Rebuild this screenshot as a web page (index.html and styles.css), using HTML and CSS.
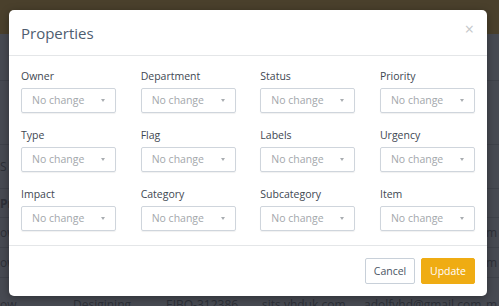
FILE: index.html
```html
<!DOCTYPE html>
<html>
<head>
<meta charset="utf-8">
<link rel="stylesheet" href="styles.css">
</head>
<body>
<div class="page">
  <div class="topbar"></div>
  <div class="row r1"></div>
  <div class="row r2"></div>
  <div class="row r3"><span class="c0">S</span></div>
  <div class="row r4"><span class="c0 bold">Pri</span></div>
  <div class="row r5"><span class="c0">ow</span><span class="cend">m</span></div>
  <div class="row r6"><span class="c0">ow</span><span class="cend">m</span></div>
  <div class="row r7"><span class="c0">ow</span><span class="c1">Desigining</span><span class="c2">EIBQ-312386</span><span class="c3">sits.vhduk.com</span><span class="c4">adolfvhd@gmail.com</span><span class="cend">m</span></div>
</div>

<div class="modal">
  <div class="modal-header">
    <h4 class="title">Properties</h4>
    <span class="close">×</span>
  </div>
  <div class="modal-body">
    <div class="field"><label>Owner</label><div class="select">No change<i class="caret"></i></div></div>
    <div class="field"><label>Department</label><div class="select">No change<i class="caret"></i></div></div>
    <div class="field"><label>Status</label><div class="select">No change<i class="caret"></i></div></div>
    <div class="field"><label>Priority</label><div class="select">No change<i class="caret"></i></div></div>
    <div class="field"><label>Type</label><div class="select">No change<i class="caret"></i></div></div>
    <div class="field"><label>Flag</label><div class="select">No change<i class="caret"></i></div></div>
    <div class="field"><label>Labels</label><div class="select">No change<i class="caret"></i></div></div>
    <div class="field"><label>Urgency</label><div class="select">No change<i class="caret"></i></div></div>
    <div class="field"><label>Impact</label><div class="select">No change<i class="caret"></i></div></div>
    <div class="field"><label>Category</label><div class="select">No change<i class="caret"></i></div></div>
    <div class="field"><label>Subcategory</label><div class="select">No change<i class="caret"></i></div></div>
    <div class="field"><label>Item</label><div class="select">No change<i class="caret"></i></div></div>
  </div>
  <div class="modal-footer">
    <button class="btn btn-cancel">Cancel</button>
    <button class="btn btn-update">Update</button>
  </div>
</div>
</body>
</html>
```
FILE: styles.css
```css
html, body {
  margin: 0;
  padding: 0;
}
body {
  width: 499px;
  height: 306px;
  overflow: hidden;
  background: #474a52;
  font-family: "Open Sans", "Noto Sans", sans-serif;
  position: relative;
}
.page {
  width: 499px;
}
.topbar {
  height: 34px;
  background: #4a402c;
}
.row {
  position: relative;
  border-bottom: 1px solid #3f424a;
  display: flex;
  align-items: center;
  font-size: 12px;
  color: #2d3038;
  box-sizing: border-box;
}
.r1 { height: 47px; }
.r2 { height: 64px; }
.r3 { height: 44px; }
.r4 { height: 29px; }
.r5 { height: 30px; }
.r6 { height: 30px; }
.r7 { height: 30px; align-items: flex-end; border-bottom: none; }
.row span { position: absolute; }
.row .c0 { left: 0; }
.row .bold { font-weight: 700; }
.row .c1 { left: 73px; }
.row .c2 { left: 166px; }
.row .c3 { left: 262px; }
.row .c4 { left: 364px; }
.row .cend { left: 486px; }
.r7 span { bottom: -5px; }

.modal {
  position: absolute;
  left: 9px;
  top: 10px;
  width: 478px;
  height: 286px;
  background: #fff;
  border-radius: 5px;
  box-shadow: 0 2px 8px rgba(0,0,0,0.35);
  display: flex;
  flex-direction: column;
}
.modal-header {
  height: 45px;
  border-bottom: 1px solid #e4e6e8;
  display: flex;
  align-items: center;
  justify-content: space-between;
  padding: 0 13px 0 12px;
}
.title {
  margin: 0;
  font-size: 15px;
  font-weight: 400;
  color: #4e5d70;
  padding-top: 1px;
}
.close {
  font-size: 16px;
  color: #c4c7ca;
  line-height: 1;
  margin-top: -7px;
}
.modal-body {
  padding: 12px 12px 14px;
  display: grid;
  grid-template-columns: repeat(4, 95px);
  justify-content: space-between;
  row-gap: 14px;
}
.field label {
  display: block;
  font-size: 10.5px;
  line-height: 16px;
  color: #3e4752;
  margin-bottom: 4px;
}
.select {
  position: relative;
  height: 25px;
  box-sizing: border-box;
  border: 1px solid #cfd5dc;
  border-radius: 2px;
  box-shadow: 0 1px 1px rgba(0,0,0,0.06);
  padding-left: 10px;
  font-size: 10.5px;
  line-height: 23px;
  color: #a3a7ab;
}
.caret {
  position: absolute;
  right: 10px;
  top: 10px;
  width: 0;
  height: 0;
  border-left: 2.5px solid transparent;
  border-right: 2.5px solid transparent;
  border-top: 3px solid #a9adb1;
}
.modal-footer {
  border-top: 1px solid #e4e6e8;
  padding: 12px;
  display: flex;
  justify-content: flex-end;
  gap: 6px;
}
.btn {
  height: 26px;
  box-sizing: border-box;
  border-radius: 2px;
  font-family: "Open Sans", "Noto Sans", sans-serif;
  font-size: 10.5px;
  padding: 0;
  cursor: pointer;
}
.btn-cancel {
  width: 50px;
  background: #fff;
  border: 1px solid #c8d0d9;
  color: #4a5563;
}
.btn-update {
  width: 54px;
  background: #efac13;
  border: 1px solid #efac13;
  color: #fff;
}
```
